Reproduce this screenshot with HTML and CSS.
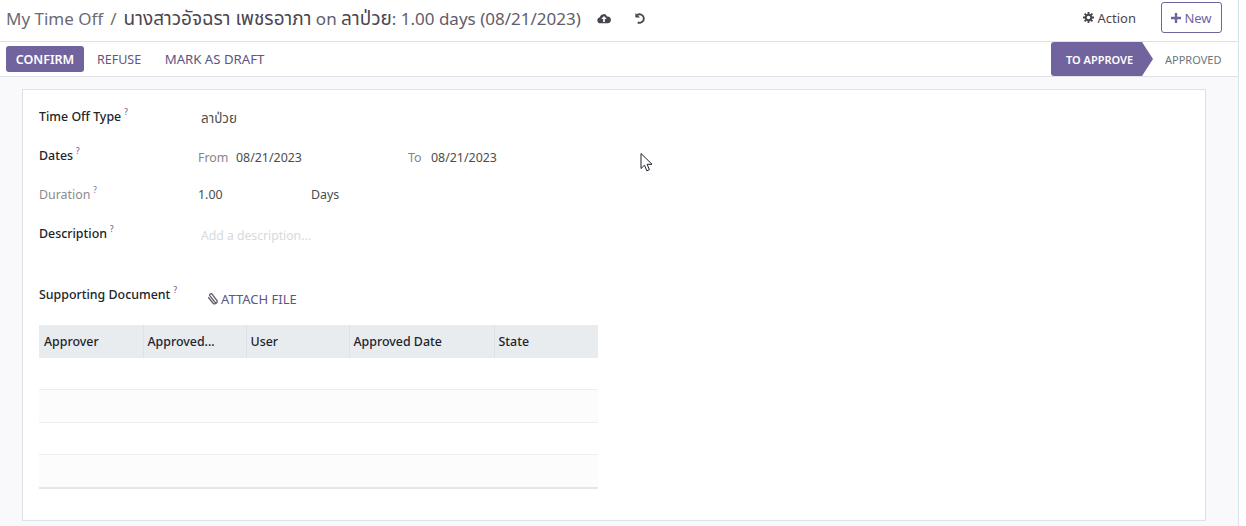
FILE: index.html
```html
<!DOCTYPE html>
<html lang="th">
<head>
<meta charset="utf-8">
<title>My Time Off</title>
<link rel="stylesheet" href="styles.css">
</head>
<body>
<div class="app">
  <header class="topbar">
    <div class="crumbs">
      <span class="crumb">My Time Off</span>
      <span class="sep">/</span>
      <span class="crumb-current"><span class="thai">นางสาวอัจฉรา เพชรอาภา</span> on <span class="thai">ลาป่วย</span>: 1.00 days (08/21/2023)</span>
      <svg class="icon-cloud" viewBox="0 0 16 12" width="14" height="11" aria-hidden="true"><path fill="#4a4650" fill-rule="evenodd" d="M4 11.5a3.5 3.5 0 0 1-.9-6.9A4.5 4.5 0 0 1 11.6 3.6 3.9 3.9 0 0 1 12.2 11.5zM8 3 4.9 6.6H7V10h2V6.6h2.100z"/></svg>
      <svg class="icon-undo" viewBox="0 0 14 14" width="13" height="13" aria-hidden="true"><path fill="none" stroke="#4a4650" stroke-width="2" d="M3.500 3.200A4.600 4.600 0 1 1 4 11.200"/><path fill="#4a4650" d="M1.500 1v5h5z"/></svg>
    </div>
    <div class="top-actions">
      <span class="action"><svg class="icon-gear" viewBox="0 0 14 14" width="11" height="11" aria-hidden="true"><circle cx="7" cy="7" r="3.600" fill="none" stroke="#4a4650" stroke-width="2.600"/><path stroke="#4a4650" stroke-width="2.400" d="M7 0v3M7 11v3M0 7h3M11 7h3M2 2l2 2M10 10l2 2M12 2l-2 2M4 10l-2 2"/></svg> Action</span>
      <button class="btn-new"><svg viewBox="0 0 10 10" width="10" height="10" aria-hidden="true"><path stroke="#71639e" stroke-width="2.400" d="M5 0v10M0 5h10"/></svg> New</button>
    </div>
  </header>

  <div class="statusbar">
    <div class="status-buttons">
      <button class="btn-confirm">CONFIRM</button>
      <button class="btn-link btn-refuse">REFUSE</button>
      <button class="btn-link btn-draft">MARK AS DRAFT</button>
    </div>
    <div class="stages">
      <span class="stage-current">TO APPROVE</span>
      <span class="stage">APPROVED</span>
    </div>
  </div>

  <main class="content">
    <section class="sheet">
      <div class="row row-type">
        <span class="label">Time Off Type<sup>?</sup></span>
        <span class="value value-inset thai">ลาป่วย</span>
      </div>
      <div class="row row-dates">
        <span class="label">Dates<sup>?</sup></span>
        <div class="dates">
          <span class="muted from">From</span><span class="date-a">08/21/2023</span>
          <span class="muted to">To</span><span>08/21/2023</span>
        </div>
      </div>
      <div class="row row-duration">
        <span class="label label-muted">Duration<sup>?</sup></span>
        <div class="dates">
          <span class="duration-num">1.00</span><span>Days</span>
        </div>
      </div>
      <div class="row row-desc">
        <span class="label">Description<sup>?</sup></span>
        <span class="value value-inset placeholder">Add a description...</span>
      </div>
      <div class="row row-doc">
        <span class="label">Supporting Document<sup>?</sup></span>
        <span class="attach"><svg viewBox="0 0 12 14" width="12" height="13" aria-hidden="true"><path fill="none" stroke="#5f5a68" stroke-width="1.400" d="M10 11 3.800 3.200a1.500 1.500 0 0 1 2.400-1.800l5 6.400a2.600 2.600 0 0 1-4 3.200L2 4.600"/></svg> ATTACH FILE</span>
      </div>
      <table class="grid">
        <thead>
          <tr>
            <th class="c1">Approver</th>
            <th class="c2">Approved...</th>
            <th class="c3">User</th>
            <th class="c4">Approved Date</th>
            <th class="c5">State</th>
          </tr>
        </thead>
        <tbody>
          <tr class="first"><td colspan="5"></td></tr>
          <tr class="alt"><td colspan="5"></td></tr>
          <tr><td colspan="5"></td></tr>
          <tr class="alt last"><td colspan="5"></td></tr>
        </tbody>
      </table>
    </section>
  </main>

  <svg class="cursor" viewBox="0 0 14 20" width="14" height="21" aria-hidden="true"><path fill="#fff" stroke="#23202a" stroke-width="1" d="M1 1v15l3.500-3.300 2.300 5.600 2.600-1.100-2.300-5.400H12z"/></svg>
</div>
</body>
</html>
```

FILE: styles.css
```css
* { box-sizing: border-box; }
html, body { margin: 0; padding: 0; height: 100%; background: #fff; overflow: hidden; }
body {
  font-family: "Noto Sans", "Open Sans", "DejaVu Sans", sans-serif;
  font-size: 12.4px;
  color: #4c4c4c;
}
.thai { font-family: "Noto Sans Thai", "Noto Sans", "DejaVu Sans", sans-serif; }
.app {
  position: relative;
  width: 1239px;
  height: 526px;
  border-right: 1px solid #dee2e6;
  display: flex;
  flex-direction: column;
}
.topbar {
  height: 42px;
  flex: none;
  border-bottom: 1px solid #dee2e6;
  display: flex;
  justify-content: space-between;
  align-items: center;
  padding: 0 16px 4px 6px;
}
.crumbs { display: flex; align-items: center; font-size: 17px; color: #6c6a76; white-space: pre; }
.sep { margin: 0 7px; }
.crumb-current { color: #5f5d68; }
.crumb-current .thai { color: #4a4650; font-size: 19px; line-height: 1; }
.icon-cloud { margin-left: 16px; }
.icon-undo { margin-left: 23px; }
.top-actions { display: flex; align-items: center; gap: 25px; }
.action { font-size: 13px; color: #4a4650; display: flex; align-items: center; gap: 4px; margin-bottom: 2px; }
.btn-new {
  width: 61px;
  height: 31px;
  border: 1px solid #71639e;
  border-radius: 3px;
  background: #fff;
  color: #71639e;
  font: inherit;
  font-size: 13px;
  padding: 0;
  margin-bottom: 2px;
  display: flex;
  align-items: center;
  justify-content: center;
  gap: 3px;
}
.statusbar {
  height: 35px;
  flex: none;
  border-bottom: 1px solid #dee2e6;
  display: flex;
  justify-content: space-between;
  align-items: center;
  padding-left: 6px;
}
.status-buttons { display: flex; align-items: center; }
.status-buttons button { font: inherit; font-size: 12.5px; border: 0; cursor: pointer; }
.btn-confirm {
  width: 78px;
  height: 26px;
  background: #71639e;
  color: #fff;
  border-radius: 3px;
  font-weight: 600 !important;
  padding: 0;
}
.btn-link { background: none; color: #5f5580; padding: 0; }
.btn-refuse { margin-left: 13px; margin-right: 23.500px; }
.status-buttons .btn-draft { font-size: 13.200px; }
.stages { display: flex; align-items: center; height: 34px; font-size: 11px; }
.stage-current {
  width: 102px;
  height: 34px;
  background: #71639e;
  color: #fff;
  font-weight: 600;
  display: flex;
  align-items: center;
  padding-left: 15px;
  border-radius: 3px 0 0 3px;
  clip-path: polygon(0 0, calc(100% - 11px) 0, 100% 50%, calc(100% - 11px) 100%, 0 100%);
}
.stage { color: #6c757d; width: 85px; padding-left: 12px; }
.content { flex: 1; background: #f9f9fb; padding: 12px 32px 5px 22px; min-height: 0; }
.sheet {
  height: 432px;
  background: #fff;
  border: 1px solid #dee2e6;
  padding: 0 16px;
}
.row { display: flex; align-items: flex-start; }
.label { width: 159px; flex: none; color: #212529; font-weight: 500; white-space: nowrap; }
.label sup { font-size: 8px; color: #71639e; margin-left: 3px; position: relative; top: -1px; vertical-align: super; line-height: 0; }
.label-muted { color: #8b8b8b; font-weight: 400; }
.value { color: #4c4c4c; }
.value-inset { padding-left: 3px; }
.value.thai { font-size: 13.500px; line-height: 1.2; }
.placeholder { color: #d6dade; font-size: 12.200px; }
.row-type { margin-top: 18px; height: 18px; }
.row-type .value { padding-top: 3px; }
.row-dates { margin-top: 21px; height: 18px; }
.row-dates .dates { padding-top: 2px; }
.row-duration { margin-top: 21px; height: 18px; }
.row-desc { margin-top: 21px; height: 18px; }
.row-desc .value { padding-top: 2px; }
.row-doc { margin-top: 43px; height: 18px; }
.dates { display: flex; color: #4c4c4c; white-space: nowrap; }
.muted { color: #87838c; }
.from { width: 38px; }
.date-a { width: 172px; }
.to { width: 23px; }
.duration-num { width: 113px; }
.attach { color: #5f5580; font-size: 13px; margin-left: 8px; padding-top: 4px; display: flex; align-items: center; gap: 3px; }
.grid {
  margin-top: 21px;
  width: 559px;
  border-collapse: collapse;
  table-layout: fixed;
}
.grid th {
  height: 33px;
  padding: 0 4px;
  background: #e9ecef;
  color: #212529;
  font-weight: 500;
  text-align: left;
  border-left: 1px solid #dee2e6;
}
.grid th.c1 { width: 104px; border-left: 0; padding-left: 5px; }
.grid th.c2, .grid th.c3 { width: 103px; }
.grid th.c4 { width: 145px; }
.grid td { height: 32px; padding: 0; border-bottom: 1px solid #eceef0; }
.grid .first td { height: 31px; }
.grid .alt td { height: 33px; background: #fcfcfc; }
.grid .last td { height: 34px; border-bottom: 2px solid #e4e6e8; }
.cursor { position: absolute; left: 640px; top: 152px; }
```
